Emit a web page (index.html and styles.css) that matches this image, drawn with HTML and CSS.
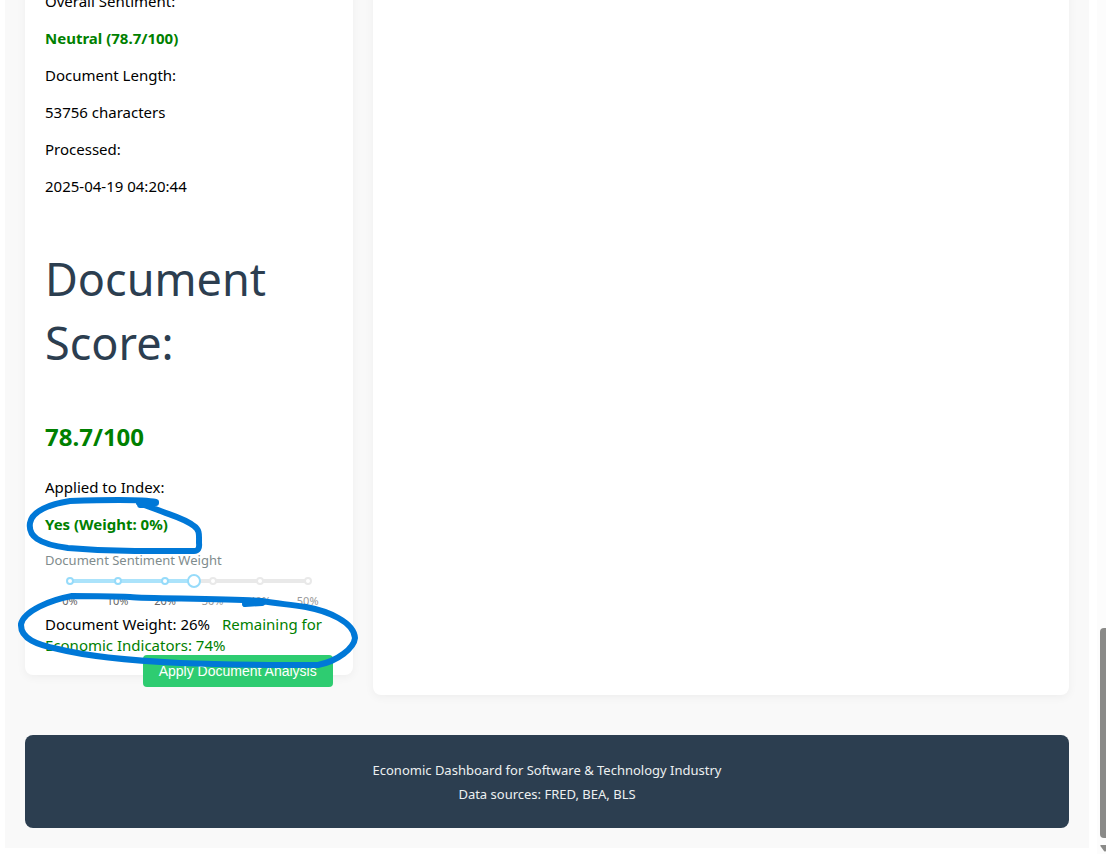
FILE: index.html
```html
<!DOCTYPE html>
<html lang="en">
<head>
<meta charset="utf-8">
<title>Economic Dashboard</title>
<link rel="stylesheet" href="styles.css">
</head>
<body>
<main class="dashboard">
  <div class="columns">
    <section class="card analysis">
      <p>Overall Sentiment:</p>
      <p class="positive">Neutral (78.7/100)</p>
      <p>Document Length:</p>
      <p>53756 characters</p>
      <p>Processed:</p>
      <p>2025-04-19 04:20:44</p>
      <h2 class="score-title">Document Score:</h2>
      <p class="positive score">78.7/100</p>
      <p>Applied to Index:</p>
      <p class="positive">Yes (Weight: 0%)</p>
      <label class="slider-label" for="weight">Document Sentiment Weight</label>
      <div class="slider">
        <div class="rail"></div>
        <div class="marks">
          <span class="mark on">0%</span>
          <span class="mark on">10%</span>
          <span class="mark on">20%</span>
          <span class="mark">30%</span>
          <span class="mark">40%</span>
          <span class="mark">50%</span>
        </div>
        <input class="range" id="weight" type="range" min="0" max="50" value="26">
      </div>
      <div class="weights"><span>Document Weight: 26%</span> <span class="remaining">Remaining for Economic Indicators: 74%</span></div>
      <button class="apply" type="button">Apply Document Analysis</button>
      <svg class="ink" width="380" height="700" viewBox="0 -9 380 700" aria-hidden="true">
        <path d="M156 503 L140 505 M156 502 C142 499 98 500 70 501 C50 504 32 511 30 523 C28 536 38 544 68 548 C90 550 112 551 135 551 L194 551 Q200 551 199 543 C199 535 200 530 194 526 C184 518 170 515 158 510 L139 503"/>
        <path d="M262 603 L245 604 M260 601 C220 598 150 599 130 597 C110 596 90 596 72 596 C50 600 24 611 21 624 C20 639 38 645 58 649 C90 657 140 661 180 663 C230 665 280 665 318 665 C338 661 354 648 355 638 C354 622 328 611 306 607 C288 604 278 604 262 601 L245 602"/>
      </svg>
    </section>
    <section class="card chart"></section>
  </div>
  <footer class="footer">
    <p>Economic Dashboard for Software &amp; Technology Industry</p>
    <p>Data sources: FRED, BEA, BLS</p>
  </footer>
</main>
<div class="scrollbar" aria-hidden="true">
  <div class="thumb"></div>
  <svg class="arrow" width="10" height="7" viewBox="0 0 10 7"><path d="M1 0h8q1 0 .6 1L6 6Q5 7 4 6L.4 1Q0 0 1 0z" fill="#8a8a88"/></svg>
</div>
</body>
</html>
```
FILE: styles.css
```css
*,
*::before {
  box-sizing: border-box;
}

body {
  margin: 0;
  padding-left: 5px;
  display: flex;
  gap: 8px;
  height: 100vh;
  overflow: hidden;
  background: #fff;
  color: #000;
  font: 15px/21px "Noto Sans", sans-serif;
}

.dashboard {
  flex: 1;
  align-self: flex-start;
  padding: 0 20px 20px;
  background: #f9f9f9;
}

.columns {
  display: grid;
  grid-template-columns: 8fr 17fr;
  gap: 20px;
  margin-top: -9px;
}

.card {
  background: #fff;
  border-radius: 0 0 8px 8px;
  box-shadow: 0 2px 10px rgba(0, 0, 0, 0.05);
}

.analysis {
  position: relative;
  margin-bottom: 20px;
  padding: 0 20px 20px;
}

.analysis p {
  margin: 0 0 16px;
}

.analysis .positive {
  color: #008000;
  font-weight: 700;
}

.analysis .score-title {
  margin: 50px 0 46px;
  color: #2c3e50;
  font-size: 45px;
  font-weight: 400;
  line-height: 64px;
}

.analysis .score {
  margin-bottom: 24px;
  font-size: 24px;
  line-height: 32px;
}

.slider-label {
  display: block;
  margin-top: -1px;
  color: #7f8c8d;
  font-size: 13px;
  line-height: 20px;
}

.slider {
  position: relative;
  height: 44px;
  padding: 0 25px;
}

.rail {
  position: absolute;
  top: 9px;
  left: 25px;
  right: 25px;
  height: 4px;
  border-radius: 2px;
  background: linear-gradient(to right, #abe3fb 52%, #e9e9e9 52%);
}

.marks {
  position: relative;
  display: flex;
  justify-content: space-between;
}

.mark {
  display: flex;
  flex-direction: column;
  align-items: center;
  width: 8px;
  margin: 7px -4px 0;
  color: #999;
  font-size: 11px;
  line-height: 16px;
}

.mark::before {
  content: "";
  flex: none;
  width: 8px;
  height: 8px;
  margin-bottom: 8px;
  border: 2px solid #e9e9e9;
  border-radius: 50%;
  background: #fff;
}

.mark.on {
  color: #666;
}

.mark.on::before {
  border-color: #96dbfa;
}

.range {
  appearance: none;
  position: absolute;
  top: 4px;
  left: 18px;
  width: calc(100% - 36px);
  height: 14px;
  margin: 0;
  background: transparent;
}

.range::-webkit-slider-thumb {
  appearance: none;
  box-sizing: border-box;
  width: 14px;
  height: 14px;
  border: 2px solid #96dbfa;
  border-radius: 50%;
  background: #fff;
}

.weights {
  height: 41px;
}

.remaining {
  margin-left: 8px;
  color: #008000;
}

.apply {
  float: right;
  height: 32px;
  margin-bottom: -32px;
  padding: 0 16px;
  border: 0;
  border-radius: 4px;
  background: #2ecc71;
  color: #fff;
  font: 14px/16px "Liberation Sans", Arial, sans-serif;
  white-space: nowrap;
}

.ink {
  position: absolute;
  top: 0;
  left: -25px;
  fill: none;
  stroke: #0078d7;
  stroke-width: 6;
  stroke-linecap: round;
  stroke-linejoin: round;
  pointer-events: none;
}

.footer {
  margin-top: 40px;
  padding: 23px 20px 22px;
  border-radius: 8px;
  background: #2c3e50;
  color: #ecf0f1;
  font-size: 13px;
  line-height: 24px;
  text-align: center;
}

.footer p {
  margin: 0;
}

.scrollbar {
  display: flex;
  flex-direction: column;
  justify-content: flex-end;
  width: 9px;
  padding-left: 3px;
  background: #fcfcfc;
  overflow: hidden;
}

.thumb {
  height: 210px;
  margin-bottom: 7px;
  border-radius: 4px 0 0 4px;
  background: #8a8a88;
}

.arrow {
  flex: none;
  margin-bottom: 2px;
}
```
